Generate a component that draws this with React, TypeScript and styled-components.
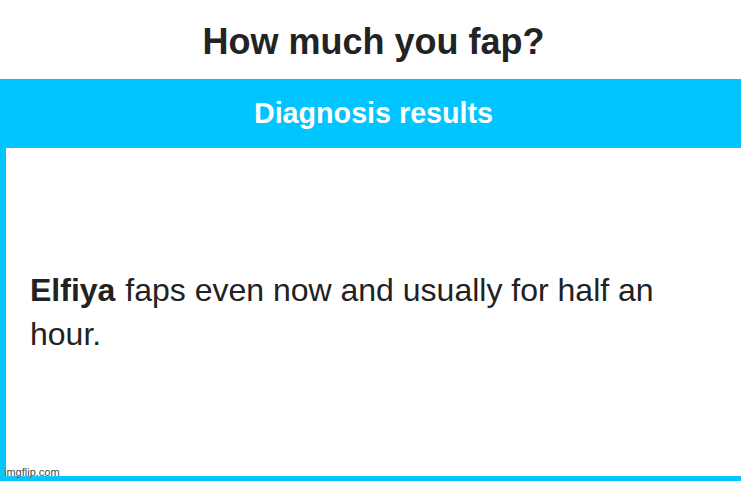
import styled, { createGlobalStyle } from 'styled-components';

const GlobalStyle = createGlobalStyle`
    html, body {
        margin: 0;
        padding: 0;
        background: #ffffff;
        overflow: hidden;
    }
`;

const Page = styled.div`
    position: relative;
    width: 741px;
    height: 481px;
    display: flex;
    flex-direction: column;
    font-family: 'Liberation Sans', Arial, sans-serif;
    color: #222222;
    overflow: hidden;
`;

const Title = styled.h1`
    margin: 0;
    height: 79px;
    box-sizing: border-box;
    padding: 4px 0 0 6px;
    display: flex;
    align-items: center;
    justify-content: center;
    font-size: 36px;
    font-weight: 700;
    color: #232323;
`;

// box runs past the right edge, so only the left and bottom border show
const ResultBox = styled.section`
    flex: 1;
    display: flex;
    flex-direction: column;
    width: 760px;
    border-left: 6px solid #00c5ff;
    border-bottom: 5px solid #00c5ff;
`;

const Header = styled.h2`
    margin: 0 0 0 -6px;
    width: 747px;
    height: 69px;
    display: flex;
    align-items: center;
    justify-content: center;
    background: #00c5ff;
    color: #ffffff;
    font-size: 28.7px;
    font-weight: 700;
`;

const Body = styled.div`
    flex: 1;
    display: flex;
    align-items: center;
    width: 681px;
    padding: 0 0 0 24px;
`;

const Message = styled.p`
    margin: 0;
    font-size: 32px;
    line-height: 44px;
    color: #222222;
`;

const Name = styled.b`
    font-weight: 700;
    margin-right: 1px;
`;

const Watermark = styled.span`
    position: absolute;
    left: 4px;
    bottom: 3px;
    font-size: 11px;
    color: #4a4a4a;
    text-shadow: 0 0 2px rgba(255, 255, 255, 0.8);
`;

const App = () => {
    return (
        <>
            <GlobalStyle />
            <Page>
                <Title>How much you fap?</Title>
                <ResultBox>
                    <Header>Diagnosis results</Header>
                    <Body>
                        <Message>
                            <Name>Elfiya</Name> faps even now and usually for half an hour.
                        </Message>
                    </Body>
                </ResultBox>
                <Watermark>imgflip.com</Watermark>
            </Page>
        </>
    );
};

export default App;
